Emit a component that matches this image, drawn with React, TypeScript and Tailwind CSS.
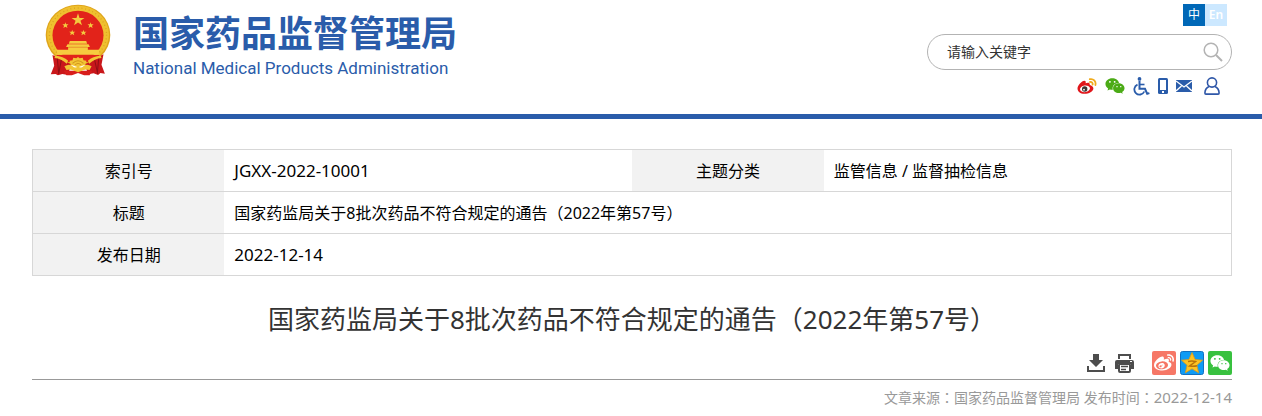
import { FaWeibo, FaWeixin } from 'react-icons/fa'

const articleTitle = '国家药监局关于8批次药品不符合规定的通告（2022年第57号）'

// 冒号居中显示
function Colon() {
  return <span className="font-['Noto_Sans_CJK_TC',sans-serif]">：</span>
}

function Emblem() {
  return (
    <svg className="w-[66px] h-[72px] shrink-0" viewBox="48 15 194 216" preserveAspectRatio="none" aria-hidden="true">
      <ellipse cx="145" cy="108" rx="95" ry="91" fill="#dfa51b" />
      <ellipse cx="145" cy="107" rx="91" ry="87" fill="#efc02f" />
      <ellipse cx="145" cy="107" rx="84" ry="80" fill="none" stroke="#dba322" strokeWidth="4" strokeDasharray="3 8" />
      <ellipse cx="145" cy="109" rx="75" ry="74" fill="#e2231a" />
      {/* 五星 */}
      <g fill="#f3cb3f">
        <path d="M145 43l4.500 13.800h14.500l-11.700 8.500 4.500 13.800-11.800-8.500-11.700 8.500 4.500-13.800-11.800-8.500h14.500z" />
        <path d="M108 70l2 6h7l-5 4 2 7-6-4-6 4 2-7-5-4h7z" />
        <path d="M182 70l2 6h7l-5 4 2 7-6-4-6 4 2-7-5-4h7z" />
        <path d="M128 92l2 6h7l-5 4 2 7-6-4-6 4 2-7-5-4h7z" />
        <path d="M161 92l2 6h7l-5 4 2 7-6-4-6 4 2-7-5-4h7z" />
      </g>
      {/* 城楼 */}
      <g fill="#f6cb3f">
        <path d="M121 126h48l3 8h-54z" />
        <path d="M114 136h62l4 8h-70z" />
        <path d="M116 145h58v7h34l-3 15H85l-3-15h34z" />
      </g>
      <path d="M118 144h54" stroke="#e3a32b" strokeWidth="2" />
      <path d="M80 168h130l-30 21h-70z" fill="#e2231a" />
      {/* 齿轮和绶带 */}
      <path d="M70 168l26 12 28 16-8 32-17-3-13 4-7-4-14 1 10-26z" fill="#c9171b" />
      <path d="M220 166l-26 14-28 16 8 30 17-3 13 5 7-6 13 2-10-27z" fill="#c9171b" />
      <path d="M84 176l4 45M96 183l-8 42M206 176l-4 45M194 183l9 42" stroke="#8f1015" strokeWidth="3" />
      <path d="M78 170q24 2 38 15l-4 9q-16-15-36-17z" fill="#f2c535" />
      <path d="M212 170q-24 2-38 15l4 9q16-15 36-17z" fill="#f2c535" />
      <path d="M105 202q16-10 27 2l13 6 13-6q11-12 27-2l-6 11-17-2-17 9-17-9-17 2z" fill="#f2c535" />
      <path d="M124 197l-4-12 9-1 2-8 9 2 5-4 5 4 9-2 2 8 9 1-4 12-21 8z" fill="#f2c535" />
      <path d="M129 193q16-15 32 0M136 198q9-9 18 0" stroke="#d1931c" strokeWidth="3" fill="none" />
      <path d="M103 215h84l-8 14h-16l-18-7-18 7h-16z" fill="#d81d1c" />
      <path d="M122 211l23-8 23 8-23 9z" fill="#f2c535" />
    </svg>
  )
}

function WeiboColor() {
  return (
    <svg className="w-5 h-4" viewBox="0 0 20 16" aria-hidden="true">
      <path d="M0.500 10.500C.5 7.500 4.800 2.800 7.300 2.800c1.500 0 1.700 1.200 1.300 2.400 2.100-.9 4.500-.9 4.200 1.800 1.800.5 3.600 1.500 3.600 3.400 0 3-4.600 5.400-8.900 5.400S.5 13.500.5 10.500z" fill="#e0161b" />
      <ellipse cx="8" cy="10.800" rx="5" ry="3.300" fill="#fff" transform="rotate(-8 8 10.800)" />
      <circle cx="7.700" cy="11" r="2.700" fill="#3b3434" />
      <circle cx="7" cy="11.700" r=".9" fill="#fff" />
      <path d="M12.800 1.200c3.600-.8 6.500 2 5.600 5.800M13 4c1.800-.3 3 .9 2.600 2.600" fill="none" stroke="#f0ab1d" strokeWidth="1.800" strokeLinecap="round" />
    </svg>
  )
}

function SearchIcon() {
  return (
    <svg className="w-5 h-5" viewBox="0 0 20 20" fill="none" stroke="#b3b3b3" strokeWidth="1.500" aria-hidden="true">
      <circle cx="8" cy="8" r="6.800" />
      <path d="M13 13l6 6" strokeWidth="2" />
    </svg>
  )
}

function WheelchairIcon() {
  return (
    <svg className="w-[17px] h-[19px]" viewBox="0 0 17 19" fill="none" stroke="#2a5caa" aria-hidden="true">
      <circle cx="6.500" cy="1.900" r="1.900" fill="#2a5caa" stroke="none" />
      <path d="M6.500 4v7.800h5.500l2.200 5 2.200-.7" strokeWidth="2" />
      <path d="M6.500 7.500h5" strokeWidth="1.600" />
      <path d="M4.500 7.600A5.200 5.200 0 1 0 11.300 14.500" strokeWidth="1.800" />
    </svg>
  )
}

function PhoneIcon() {
  return (
    <svg className="w-[10px] h-4" viewBox="0 0 10 16" aria-hidden="true">
      <rect x="0" y="0" width="10" height="16" rx="1.500" fill="#2a5caa" />
      <rect x="2" y="2" width="6" height="10" fill="#fff" />
      <rect x="4" y="13" width="2" height="2" fill="#fff" />
    </svg>
  )
}

function MailIcon() {
  return (
    <svg className="w-4 h-3" viewBox="0 0 16 12" aria-hidden="true">
      <rect width="16" height="12" fill="#2a5caa" />
      <path d="M0 1l8 6 8-6M0 11l5.500-5M16 11l-5.500-5" fill="none" stroke="#fff" strokeWidth="1.300" />
    </svg>
  )
}

function UserIcon() {
  return (
    <svg className="w-4 h-[18px]" viewBox="0 0 16 18" fill="none" stroke="#2f57a8" strokeWidth="1.600" aria-hidden="true">
      <circle cx="8" cy="5.500" r="4.600" />
      <path d="M5 9.500C2.300 10.800 1 13 .9 16q0 1.100 1 1.100h12.200q1 0 1-1.100c-.1-3-1.400-5.200-4.100-6.500" />
    </svg>
  )
}

function DownloadIcon() {
  return (
    <svg className="w-[18px] h-[18px]" viewBox="0 0 18 18" fill="#4d4d4d" aria-hidden="true">
      <path d="M6 0h6v6h4l-7 7-7-7h4z" />
      <path d="M0 12h2v4h14v-4h2v6H0z" />
    </svg>
  )
}

function PrintIcon() {
  return (
    <svg className="w-[19px] h-[19px]" viewBox="0 0 19 19" aria-hidden="true">
      <path d="M4 5V1h11v4" fill="#fff" stroke="#4d4d4d" strokeWidth="2" />
      <path d="M2 6h15q2 0 2 2v7h-3v-5H3v5H0V8q0-2 2-2z" fill="#4d4d4d" />
      <rect x="4" y="10" width="11" height="8" rx="1" fill="#fff" stroke="#4d4d4d" strokeWidth="2" />
      <path d="M6 12.500h7M6 15.500h5" stroke="#4d4d4d" strokeWidth="1.400" />
      <rect x="15" y="7" width="2" height="1" fill="#fff" />
    </svg>
  )
}

function QzoneIcon() {
  return (
    <svg className="w-6 h-6" viewBox="0 0 24 24" aria-hidden="true">
      <rect x=".5" y=".5" width="23" height="23" rx="2" fill="#0f9bf5" stroke="#1270c0" />
      <path d="M12 1.500l3.100 7 7.400.7-5.600 5 1.700 7.600-6.600-4-6.600 4 1.700-7.600-5.600-5 7.400-.7z" fill="#fdc324" stroke="#e09a14" strokeWidth=".8" strokeLinejoin="round" />
      <path d="M8 10.500q4-.8 7.500 0L9.500 15q4 .7 7.500-.2" fill="none" stroke="#b8720a" strokeWidth="1.500" />
    </svg>
  )
}

export default function App() {
  return (
    <div className="min-h-screen bg-white text-black font-['Noto_Sans','Noto_Sans_CJK_SC',sans-serif]">
      <header className="flex justify-between border-b-5 border-[#2a5caa] pl-[45px] pr-[30px] pt-1 pb-[18px]">
        <a href="#" className="flex items-start gap-[22px] text-[#2a5caa]">
          <Emblem />
          <span className="flex flex-col pt-[5px]">
            <span className="text-4xl leading-[44px] font-bold font-['Noto_Sans_CJK_SC',sans-serif]">国家药品监督管理局</span>
            <span className="text-[17px] leading-[30px] font-['Roboto',sans-serif]">National Medical Products Administration</span>
          </span>
        </a>

        <div className="flex w-[305px] flex-col">
          <nav className="mr-[5px] flex justify-end text-xs leading-[22px] text-white text-center">
            <a href="#" className="w-[22px] bg-[#0068b7]">中</a>
            <a href="#" className="w-[22px] bg-[#cce8ff] font-semibold">En</a>
          </nav>
          <form className="mt-2 flex h-9 items-center rounded-full border border-[#b3b3b3] pl-[19px] pr-2">
            <input
              type="text"
              aria-label="请输入关键字"
              placeholder="请输入关键字"
              className="min-w-0 flex-1 bg-transparent text-sm outline-none placeholder:text-[#333]"
            />
            <button type="button" aria-label="搜索"><SearchIcon /></button>
          </form>
          <div className="mt-[6px] mr-3 flex h-5 items-center justify-end gap-2">
            <a href="#" aria-label="微博"><WeiboColor /></a>
            <a href="#" aria-label="微信"><FaWeixin className="w-5 h-5 text-[#4bab16]" /></a>
            <a href="#" aria-label="无障碍"><WheelchairIcon /></a>
            <a href="#" aria-label="手机版"><PhoneIcon /></a>
            <a href="#" aria-label="邮箱"><MailIcon /></a>
            <a href="#" aria-label="个人中心" className="ml-1"><UserIcon /></a>
          </div>
        </div>
      </header>

      <main className="mx-[30px] mt-[30px] pl-[2px]">
        <table className="w-full table-fixed border-collapse border border-[#d7d7d7] text-base leading-6">
          <colgroup>
            <col className="w-[16%]" />
            <col className="w-[34%]" />
            <col className="w-[16%]" />
            <col className="w-[34%]" />
          </colgroup>
          <tbody>
            <tr className="h-[42px] border-b border-[#d7d7d7]">
              <th className="bg-[#f2f2f2] font-normal">索引号</th>
              <td className="px-[10px] text-[17px]">JGXX-2022-10001</td>
              <th className="bg-[#f2f2f2] font-normal">主题分类</th>
              <td className="px-[10px]">监管信息 / 监督抽检信息</td>
            </tr>
            <tr className="h-[42px] border-b border-[#d7d7d7]">
              <th className="bg-[#f2f2f2] font-normal">标题</th>
              <td colSpan={3} className="px-[10px]">{articleTitle}</td>
            </tr>
            <tr className="h-[42px]">
              <th className="bg-[#f2f2f2] font-normal">发布日期</th>
              <td colSpan={3} className="px-[10px] text-[17px]">2022-12-14</td>
            </tr>
          </tbody>
        </table>

        <h1 className="mt-6 text-center text-[26px] leading-[38px] text-[#333]">{articleTitle}</h1>

        <div className="mt-[13px] flex items-center justify-end border-b border-[#999] pb-1">
          <button type="button" aria-label="下载" className="mr-[10px]"><DownloadIcon /></button>
          <button type="button" aria-label="打印" className="mr-[18px]"><PrintIcon /></button>
          <div className="flex gap-1">
            <a href="#" aria-label="分享到微博" className="flex size-6 items-center justify-center rounded-xs bg-[#f67766] text-white">
              <FaWeibo className="size-5" />
            </a>
            <a href="#" aria-label="分享到QQ空间"><QzoneIcon /></a>
            <a href="#" aria-label="分享到微信" className="flex size-6 items-center justify-center rounded-xs bg-[#38c13f] text-white">
              <FaWeixin className="size-5" />
            </a>
          </div>
        </div>

        <p className="mt-[6px] text-right text-sm leading-[22px] text-[#999]">
          文章来源<Colon />国家药品监督管理局 发布时间<Colon /><span className="text-[15px]">2022-12-14</span>
        </p>
      </main>
    </div>
  )
}
